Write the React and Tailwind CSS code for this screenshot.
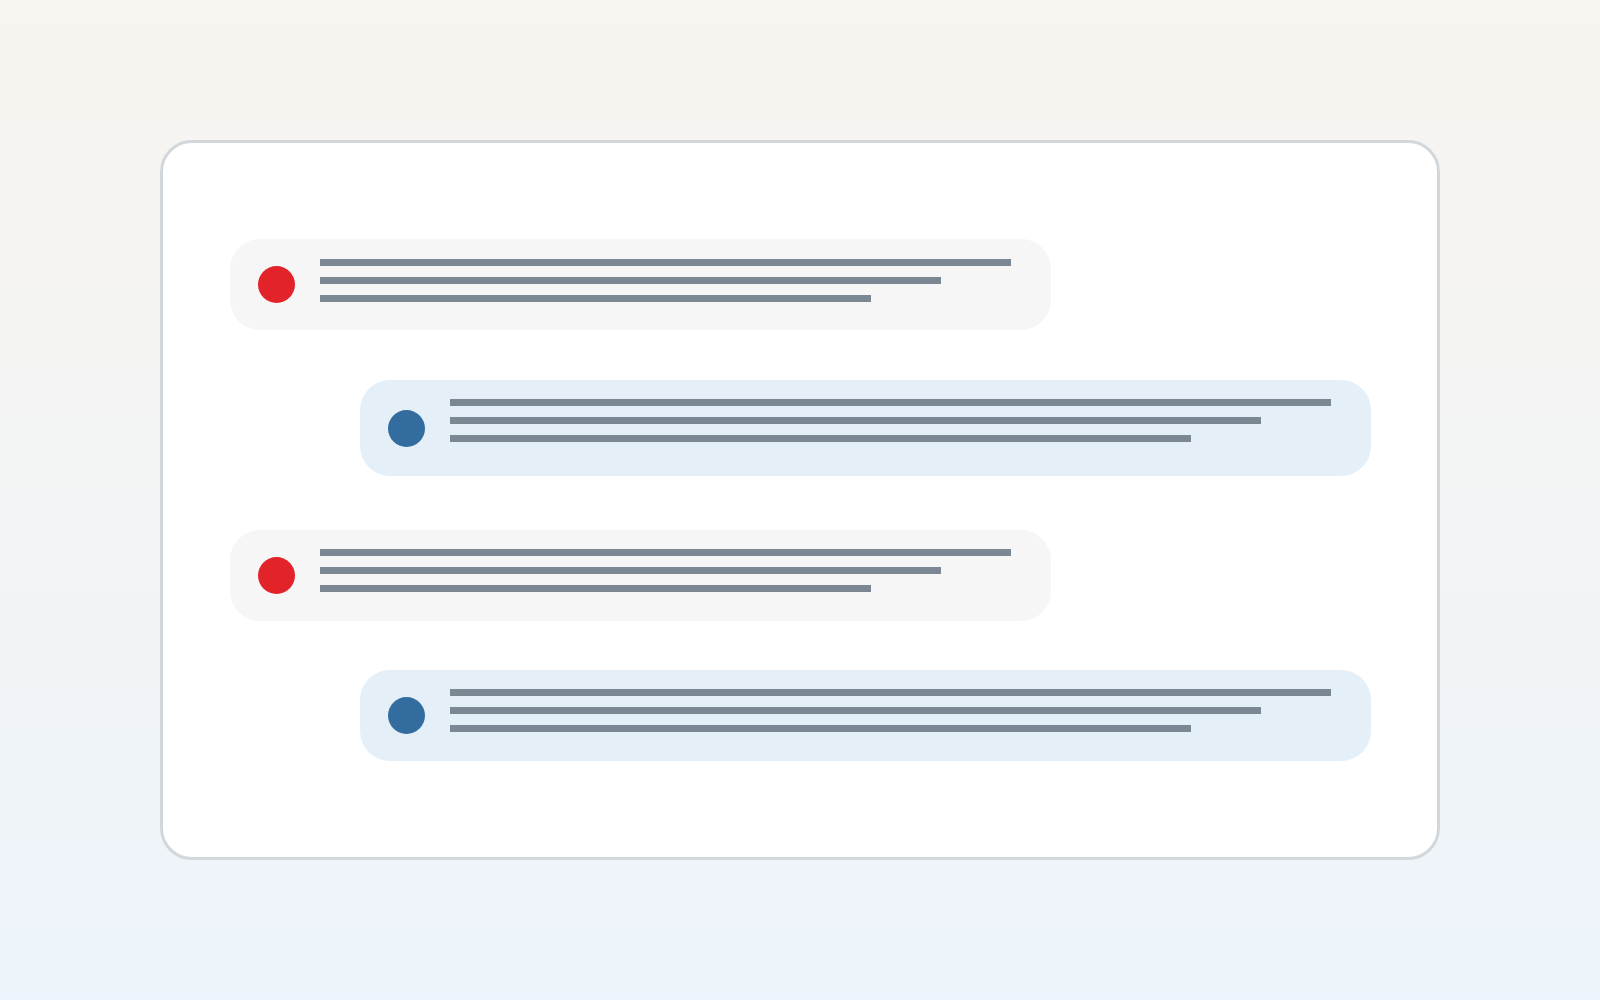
const MESSAGES = [
  { id: 1, side: 'left', height: 'h-[91px]', top: 'mt-[20px]' },
  { id: 2, side: 'right', height: 'h-[96px]', top: 'mt-[19px]' },
  { id: 3, side: 'left', height: 'h-[91px]', top: 'mt-[19px]' },
  { id: 4, side: 'right', height: 'h-[91px]', top: 'mt-[19px]' },
];

const Bubble = ({ side, height, top }) => {
  const isLeft = side === 'left';
  return (
    <div
      className={`flex items-center ${height} rounded-[30px] pl-[28px] pr-[40px] ${
        isLeft ? 'w-[821px] self-start bg-[#f6f6f6]' : 'w-[1011px] self-end bg-[#e4eff8]'
      }`}
    >
      {/* avatar dot */}
      <div className={`w-[37px] h-[37px] shrink-0 rounded-full ${isLeft ? 'bg-[#e3232a]' : 'bg-[#336c9f]'}`} />
      {/* text placeholder lines */}
      <div className={`flex-1 self-start ${top} ml-[25px] flex flex-col gap-[11px]`}>
        <div className="h-[7px] w-full bg-[#7b8793]" />
        <div className="h-[7px] w-[calc(100%-70px)] bg-[#7b8793]" />
        <div className="h-[7px] w-[calc(100%-140px)] bg-[#7b8793]" />
      </div>
    </div>
  );
};

export default function App() {
  return (
    <div className="w-[1600px] h-[1000px] bg-gradient-to-b from-[#f8f4ef] to-[#edf4fb] flex items-center justify-center">
      <div className="w-[1280px] h-[720px] bg-white border-[3px] border-[#d2d7dc] rounded-[32px] pl-[67px] pr-[66px] pt-[96px] pb-[96px] flex flex-col">
        <Bubble {...MESSAGES[0]} />
        <div className="mt-[50px] flex flex-col">
          <Bubble {...MESSAGES[1]} />
        </div>
        <div className="mt-[54px] flex flex-col">
          <Bubble {...MESSAGES[2]} />
        </div>
        <div className="mt-[49px] flex flex-col">
          <Bubble {...MESSAGES[3]} />
        </div>
      </div>
    </div>
  );
}
